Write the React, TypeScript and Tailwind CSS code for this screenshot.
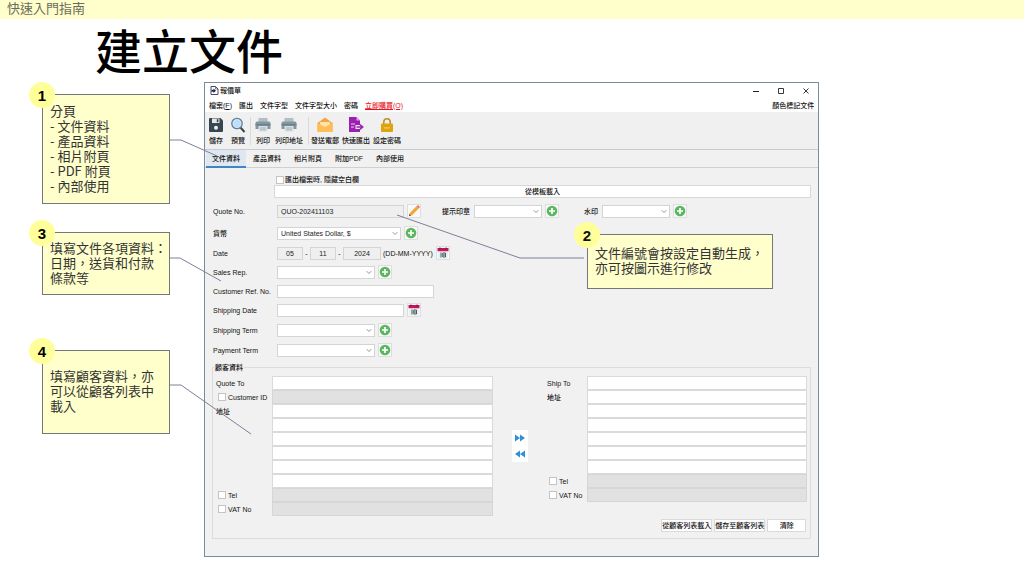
import React, { useState } from "react";

// Shared look of the small form controls
const field = "h-[13px] min-w-0 border border-[#d4d4d4] bg-white px-[3px] text-[7px] leading-[11px] text-[#222] outline-none";
const readOnlyField = "h-[13px] min-w-0 border border-[#d4d4d4] bg-[#efefef] px-[3px] text-[7px] leading-[11px] text-[#222] outline-none";
const iconButton = "flex h-[14px] w-[14px] shrink-0 items-center justify-center border border-[#dedede] bg-[#f8f8f8]";

export default function App() {
  return (
    <div lang="zh-Hant" className="min-h-screen bg-white font-['Liberation_Sans','Noto_Sans_CJK_TC',sans-serif] text-black">
      <header className="bg-[#ffffcc] px-[7px] pb-[3px] text-[13px] leading-[16px] text-[#6b6b5c] font-['Noto_Sans_CJK_TC',sans-serif]">
        快速入門指南
      </header>

      <h1 className="pt-[6px] pb-[9px] pl-[95px] text-[47px] leading-[48px] font-medium font-['Noto_Sans_CJK_TC',sans-serif]">
        建立文件
      </h1>

      <main className="flex items-start pl-[42px]">
        <aside className="relative z-10 mt-3 w-[128px] shrink-0">
          <Callout
            number={1}
            className="pt-[8px] pb-[10px]"
            text={"分頁\n- 文件資料\n- 產品資料\n- 相片附頁\n- PDF 附頁\n- 內部使用"}
            line="1,46 12,46 48,62"
          />
          <Callout
            number={3}
            className="mt-7 pt-[7px] pb-[9px]"
            text={"填寫文件各項資料：\n日期，送貨和付款\n條款等"}
            line="1,26 11,26 52,49"
          />
          <Callout
            number={4}
            className="mt-[55px] pt-[17px] pb-[20px]"
            text={"填寫顧客資料，亦\n可以從顧客列表中\n載入"}
            line="1,35 12,35 82,84"
          />
        </aside>
        <QuoteWindow />
      </main>
    </div>
  );
}

type CalloutProps = {
  number: number;
  text: string;
  line: string;
  className?: string;
  lineSide?: "left" | "right";
};

function Callout({ number, text, line, className = "", lineSide = "right" }: CalloutProps) {
  return (
    <div className={`relative border border-[#77777a] bg-[#ffffcc] pl-[7px] ${className}`}>
      <span className="absolute -top-[13px] -left-[14px] flex h-[26px] w-[26px] items-center justify-center rounded-full bg-[#ffff99] text-[15px] leading-none font-bold">
        {number}
      </span>
      <p className="text-[13px] leading-[15px] font-normal whitespace-pre text-[#333] font-['Noto_Sans_CJK_TC',sans-serif]">{text}</p>
      <svg
        className={`pointer-events-none absolute -top-px h-px w-px overflow-visible ${lineSide === "right" ? "left-full" : "left-0"}`}
        aria-hidden="true"
      >
        <polyline points={line} fill="none" stroke="#7a8296" strokeWidth="1" />
      </svg>
    </div>
  );
}

function QuoteWindow() {
  return (
    <section className="relative mr-[20vw] ml-[34px] min-w-0 flex-1 border border-[#7d8a9c] bg-[#f1f1f1] pb-[17px] text-[7px] leading-[9px] font-medium text-[#111]">
      <TitleBar />
      <MenuBar />
      <Toolbar />
      <Tabs />
      <form className="px-[7px]" onSubmit={(e) => e.preventDefault()}>
        <DocumentFields />
        <CustomerFields />
      </form>
      <div className="absolute top-[151px] left-[382px] w-[186px]">
        <Callout
          number={2}
          className="pt-[10px] pb-[13px]"
          text={"文件編號會按設定自動生成，\n亦可按圖示進行修改"}
          line="-4,24 -68,24 -191,-19"
          lineSide="left"
        />
      </div>
    </section>
  );
}

function TitleBar() {
  return (
    <div className="flex h-[15px] items-center bg-white pr-[8px] pl-[5px]">
      <svg className="h-[9px] w-[9px]" viewBox="0 0 9 9" aria-hidden="true">
        <path d="M1 .5h4.5L8 3v5.5H1z" fill="#fff" stroke="#444a63" />
        <path d="M5.5.5V3H8" fill="none" stroke="#444a63" strokeWidth=".7" />
        <path d="M1.500 3.700h2V2.500L6 4.700 3.500 7V5.800h-2z" fill="#242a4d" />
      </svg>
      <h2 className="ml-px">報價單</h2>
      <div className="ml-auto flex gap-[17px]">
        <button type="button" aria-label="Minimize">
          <svg className="h-2 w-2" viewBox="0 0 8 8"><path d="M1 4.5h6" stroke="#222" /></svg>
        </button>
        <button type="button" aria-label="Maximize">
          <svg className="h-2 w-2" viewBox="0 0 8 8"><path d="M1.5 1.5h5v5h-5z" fill="none" stroke="#222" strokeWidth=".9" /></svg>
        </button>
        <button type="button" aria-label="Close">
          <svg className="h-2 w-2" viewBox="0 0 8 8"><path d="M1.5 1.5l5 5m0-5l-5 5" stroke="#222" strokeWidth=".9" /></svg>
        </button>
      </div>
    </div>
  );
}

function MenuBar() {
  return (
    <nav className="flex h-[14px] items-center gap-[7px] bg-white px-[4px]">
      <button type="button">檔案(<u>F</u>)</button>
      <button type="button">匯出</button>
      <button type="button">文件字型</button>
      <button type="button">文件字型大小</button>
      <button type="button">密碼</button>
      <a href="#buy" className="text-[#e8141c] underline">立即購買(O)</a>
      <button type="button" className="ml-auto">顏色標記文件</button>
    </nav>
  );
}

function ToolButton({ label, children }: { label: string; children: React.ReactNode }) {
  return (
    <button type="button" className="flex flex-col items-center gap-[3px] whitespace-nowrap">
      <svg className="-mx-px h-4 w-4" viewBox="0 0 16 16" aria-hidden="true">{children}</svg>
      <span>{label}</span>
    </button>
  );
}

function PrinterShape() {
  return (
    <>
      <path d="M3.5 1h9v4h-9z" fill="#b0bec5" />
      <path d="M2 4.5h12A1.5 1.5 0 0 1 15.5 6v6H.5V6A1.5 1.5 0 0 1 2 4.5z" fill="#8397a1" />
      <path d="M.5 7h15v1.5H.5z" fill="#6c818c" />
      <path d="M3.5 9h9v5.5h-9z" fill="#d9e0e3" />
      <path d="M5 11h6M5 12.8h6" stroke="#9aabb3" strokeWidth=".8" />
    </>
  );
}

function Toolbar() {
  return (
    <div className="flex h-[38px] items-start border-b border-[#c3ccd3] bg-[#f0f0f0] pt-[5px] pl-[4px]">
      <div className="flex gap-2 pr-[5px]">
        <ToolButton label="儲存">
          <path d="M2 1h10.5L15 3.5V14a1 1 0 0 1-1 1H2a1 1 0 0 1-1-1V2a1 1 0 0 1 1-1z" fill="#37474f" />
          <path d="M4 1.5h7.5V6H4z" fill="#e3e7e9" />
          <path d="M8.8 2.2h1.6v3H8.8z" fill="#37474f" />
          <circle cx="8" cy="10.8" r="2" fill="#f0f0f0" />
        </ToolButton>
        <ToolButton label="預覽">
          <path d="M10.5 10.5L14.5 15" stroke="#37474f" strokeWidth="2" />
          <circle cx="7" cy="6.5" r="5.2" fill="#d5eafa" stroke="#5c7f9c" strokeWidth="1.3" />
          <circle cx="7" cy="6.5" r="3.4" fill="#bbdefb" />
        </ToolButton>
      </div>
      <div className="flex gap-[5px] border-l border-[#dadada] px-[5px]">
        <ToolButton label="列印"><PrinterShape /></ToolButton>
        <ToolButton label="列印地址"><PrinterShape /></ToolButton>
      </div>
      <div className="flex gap-[3px] border-l border-[#dadada] px-[2px]">
        <ToolButton label="發送電郵">
          <path d="M.5 6L8 .5 15.5 6v8.500H.5z" fill="#f2a544" />
          <path d="M3 5h10v5H3z" fill="#ffe3a6" />
          <path d="M.5 6L8 10 15.500 6v9H.5z" fill="#ffbd57" />
        </ToolButton>
        <ToolButton label="快速匯出">
          <path d="M1 0h7.5L12 3.5V8H7.5v4H12v3H1z" fill="#9c1fb2" />
          <path d="M8.5 0v3.5H12z" fill="#dfa2ea" />
          <path d="M3 7h4M3 10h3" stroke="#efd2f4" />
          <path d="M8.5 10h6M12 7.6L14.8 10 12 12.4" fill="none" stroke="#9c1fb2" strokeWidth="1.4" />
        </ToolButton>
        <ToolButton label="設定密碼">
          <path d="M4.8 8V5a3.2 3.2 0 0 1 6.4 0v3" fill="none" stroke="#b98c2e" strokeWidth="1.5" />
          <rect x="2" y="6.5" width="12" height="8.5" rx="1" fill="#dfa40c" />
          <path d="M5.5 10.8h1M7.5 10.8h1M9.5 10.8h1" stroke="#fff2b0" strokeWidth="1.2" />
        </ToolButton>
      </div>
    </div>
  );
}

function Tabs() {
  const tabs = ["文件資料", "產品資料", "相片附頁", "附加PDF", "內部使用"];
  const [active, setActive] = useState(tabs[0]);

  return (
    <div role="tablist" className="flex h-[18px] gap-px border-b border-[#d0d0d0] pl-px">
      {tabs.map((tab) => (
        <button
          key={tab}
          type="button"
          role="tab"
          aria-selected={tab === active}
          onClick={() => setActive(tab)}
          className={`h-[18px] border-b-2 px-[6px] ${
            tab === active ? "border-[#4083c9] bg-[#dfe8f1]" : "border-transparent"
          }`}
        >
          {tab}
        </button>
      ))}
    </div>
  );
}

function Row({ id, label, children }: { id: string; label: string; children: React.ReactNode }) {
  return (
    <div className="flex h-[14px] items-center">
      <label htmlFor={id} className="w-[65px] shrink-0 pl-px whitespace-nowrap">{label}</label>
      {children}
    </div>
  );
}

function Select({ id, className, value = "" }: { id: string; className: string; value?: string }) {
  return (
    <span className={`relative block ${className}`}>
      <select id={id} className={`${field} block w-full appearance-none`}>
        <option>{value}</option>
      </select>
      <svg className="pointer-events-none absolute top-[4px] right-[3px] h-[5px] w-[6px]" viewBox="0 0 6 5" aria-hidden="true">
        <path d="M.7 1.2L3 3.5l2.3-2.3" fill="none" stroke="#888" strokeWidth=".9" />
      </svg>
    </span>
  );
}

function AddButton() {
  return (
    <button type="button" aria-label="Add" className={`${iconButton} ml-[3px]`}>
      <svg className="h-3 w-3 shrink-0" viewBox="0 0 12 12">
        <circle cx="6" cy="6" r="5.3" fill="#5cb660" />
        <path d="M6 3v6M3 6h6" stroke="#fff" strokeWidth="1.7" />
      </svg>
    </button>
  );
}

function CalendarButton() {
  return (
    <button type="button" aria-label="Pick a date" className={`${iconButton} ml-[3px]`}>
      <svg className="h-3 w-3 shrink-0" viewBox="0 0 12 12">
        <path d="M1 2h10v9.5H1z" fill="#eceff1" />
        <path d="M.5 1h11v3.2H.5z" fill="#c2185b" />
        <path d="M3 .5v2M9 .5v2" stroke="#7d1240" />
        <path d="M4 5.5v5M5.8 6h2.7v4H5.8zM5.8 8h2.7" fill="none" stroke="#455a64" />
      </svg>
    </button>
  );
}

function DocumentFields() {
  return (
    <>
      <div className="flex items-center pt-[7px] pl-[64px]">
        <input id="hide-blank" type="checkbox" className="h-[8px] w-[8px] appearance-none border border-[#c4c4c4] bg-white checked:bg-[#4083c9]" />
        <label htmlFor="hide-blank" className="pl-px">匯出檔案時, 隱藏空白欄</label>
      </div>
      <div className="mt-px flex pl-[62px]">
        <button type="button" className="h-[13px] flex-1 border border-[#d8d8d8] bg-white">從模板載入</button>
      </div>

      <div className="mt-[6px]">
        <Row id="quote-no" label="Quote No.">
          <input id="quote-no" readOnly defaultValue="QUO-202411103" className={`${readOnlyField} w-[127px]`} />
          <button type="button" aria-label="Edit quote number" className={`${iconButton} ml-[3px]`}>
            <svg className="h-3 w-3 shrink-0" viewBox="0 0 12 12">
              <path d="M1 11l.8-3L8.5 1.3l2.2 2.2L4 10.2z" fill="#f5a631" />
              <path d="M8.5 1.3l1-.8a.8.8 0 0 1 1.1 0l.9.9a.8.8 0 0 1 0 1.1l-.8 1z" fill="#e57368" />
              <path d="M1 11l.5-2L3 10.5z" fill="#37474f" />
            </svg>
          </button>
          <label htmlFor="stamp" className="ml-[21px] w-[32px] shrink-0">提示印章</label>
          <Select id="stamp" className="w-[68px]" />
          <AddButton />
          <label htmlFor="watermark" className="ml-[25px] w-[18px] shrink-0">水印</label>
          <Select id="watermark" className="w-[68px]" />
          <AddButton />
        </Row>
      </div>

      <div className="mt-[8px] space-y-[6px]">
        <Row id="currency" label="貨幣">
          <Select id="currency" className="w-[124px]" value="United States Dollar, $" />
          <AddButton />
        </Row>
        <Row id="day" label="Date">
          <input id="day" readOnly defaultValue="05" className={`${readOnlyField} w-[26px] text-center`} />
          <span className="w-[7px] text-center">-</span>
          <input aria-label="Month" readOnly defaultValue="11" className={`${readOnlyField} w-[26px] text-center`} />
          <span className="w-[7px] text-center">-</span>
          <input aria-label="Year" readOnly defaultValue="2024" className={`${readOnlyField} w-[38px] text-center`} />
          <span className="ml-[2px] whitespace-nowrap">(DD-MM-YYYY)</span>
          <CalendarButton />
        </Row>
      </div>
      <div className="mt-[5px] space-y-[5px]">
        <Row id="sales-rep" label="Sales Rep.">
          <Select id="sales-rep" className="w-[98px]" />
          <AddButton />
        </Row>
        <Row id="customer-ref" label="Customer Ref. No.">
          <input id="customer-ref" className={`${field} w-[157px]`} />
        </Row>
        <Row id="shipping-date" label="Shipping Date">
          <input id="shipping-date" className={`${field} w-[127px]`} />
          <CalendarButton />
        </Row>
      </div>
      <div className="mt-[6px] space-y-[6px]">
        <Row id="shipping-term" label="Shipping Term">
          <Select id="shipping-term" className="w-[98px]" />
          <AddButton />
        </Row>
        <Row id="payment-term" label="Payment Term">
          <Select id="payment-term" className="w-[98px]" />
          <AddButton />
        </Row>
      </div>
    </>
  );
}

type AddressLine = { label?: string; optional?: boolean };

const quoteLines: AddressLine[] = [
  { label: "Quote To" },
  { label: "Customer ID", optional: true },
  { label: "地址" },
  {},
  {},
  {},
  {},
  {},
  { label: "Tel", optional: true },
  { label: "VAT No", optional: true },
];

const shipLines: AddressLine[] = [
  { label: "Ship To" },
  { label: "地址" },
  {},
  {},
  {},
  {},
  {},
  { label: "Tel", optional: true },
  { label: "VAT No", optional: true },
];

type AddressBlockProps = {
  name: string;
  lines: AddressLine[];
  className: string;
  labelWidth: string;
};

function AddressBlock({ name, lines, className, labelWidth }: AddressBlockProps) {
  return (
    <div className={`min-w-0 grow ${className}`}>
      {lines.map((line, i) => {
        const id = `${name}-${i}`;
        return (
          <div key={id} className="flex h-[14px] items-center">
            <div className={`flex shrink-0 items-center whitespace-nowrap ${labelWidth}`}>
              {line.optional && (
                <input
                  id={`${id}-on`}
                  type="checkbox"
                  className="mr-[2px] ml-[2px] h-[8px] w-[8px] appearance-none border border-[#c4c4c4] bg-white checked:bg-[#4083c9]"
                />
              )}
              {line.label && <label htmlFor={line.optional ? `${id}-on` : id}>{line.label}</label>}
            </div>
            <input
              id={id}
              aria-label={line.label ?? `Address line ${i}`}
              disabled={line.optional}
              className={`h-[14px] min-w-0 flex-1 border px-[3px] outline-none ${
                line.optional ? "border-[#d6d6d6] bg-[#e1e1e1]" : "border-[#dadada] bg-white"
              }`}
            />
          </div>
        );
      })}
    </div>
  );
}

function CustomerFields() {
  const action = "h-[13px] border border-[#dadada] bg-white whitespace-nowrap";

  return (
    <fieldset className="mt-[6px] border border-[#dcdcdc] pr-[3px] pb-[6px] pl-[3px]">
      <legend className="-ml-[2px] px-px">顧客資料</legend>
      <div className="flex pt-[4px]">
        <AddressBlock name="quote" lines={quoteLines} className="basis-[277px]" labelWidth="w-[56px]" />
        <div className="mt-[54px] mr-[19px] ml-[19px] flex h-8 w-4 shrink-0 flex-col bg-white">
          <button type="button" aria-label="Copy to ship to" className="flex h-4 items-center justify-center">
            <svg className="h-[8px] w-[10px]" viewBox="0 0 10 8"><path d="M0 .5l5 3.5-5 3.5zM5 .5l5 3.5-5 3.5z" fill="#2f8fd8" /></svg>
          </button>
          <button type="button" aria-label="Copy to quote to" className="flex h-4 items-center justify-center">
            <svg className="h-[8px] w-[10px]" viewBox="0 0 10 8"><path d="M5 .5L0 4l5 3.5zM10 .5L5 4l5 3.5z" fill="#2f8fd8" /></svg>
          </button>
        </div>
        <AddressBlock name="ship" lines={shipLines} className="basis-[260px]" labelWidth="w-[40px]" />
      </div>
      <div className="mt-[3px] flex justify-end gap-[2px] pr-px">
        <button type="button" className={action}>從顧客列表載入</button>
        <button type="button" className={action}>儲存至顧客列表</button>
        <button type="button" className={`${action} w-[39px]`}>清除</button>
      </div>
    </fieldset>
  );
}
